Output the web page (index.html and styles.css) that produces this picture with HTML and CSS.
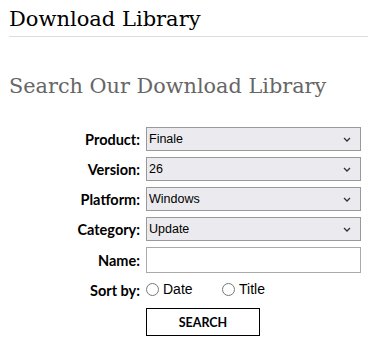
FILE: index.html
```html
<!DOCTYPE html>
<html lang="en">
  <head>
    <meta charset="UTF-8" />
    <meta name="viewport" content="width=device-width, initial-scale=1.0" />
    <title>Download Library</title>
    <link rel="stylesheet" href="styles.css">
  </head>
  <body>
    <h1 class="page-title">Download Library</h1>

    <h2 class="section-title">Search Our Download Library</h2>

    <form id="searchForm" class="search-form">
      <label for="product">Product:</label>
      <select id="product" name="product">
        <option>Finale</option>
      </select>

      <label for="version">Version:</label>
      <select id="version" name="version">
        <option>26</option>
      </select>

      <label for="platform">Platform:</label>
      <select id="platform" name="platform">
        <option>Windows</option>
      </select>

      <label for="category">Category:</label>
      <select id="category" name="category">
        <option>Update</option>
      </select>

      <label for="name">Name:</label>
      <input type="text" id="name" name="name" />

      <label class="sort-label">Sort by:</label>
      <div class="sort-options">
        <label class="radio"><input type="radio" name="sort" value="date" /> Date</label>
        <label class="radio"><input type="radio" name="sort" value="title" /> Title</label>
      </div>

      <span></span>
      <button type="submit" class="btn">SEARCH</button>
    </form>
  </body>
</html>
```

FILE: styles.css
```css
body {
  margin: 0;
  padding: 0 0 0 9px;
  font-family: Lato, Arial, sans-serif;
  color: #000;
  background: #fff;
}
.page-title {
  font-family: "DejaVu Serif", serif;
  font-weight: normal;
  font-size: 21px;
  line-height: 26px;
  margin: 6px 0 0;
  padding-bottom: 4px;
  border-bottom: 1px solid #ddd;
}
.section-title {
  font-family: "DejaVu Serif", serif;
  font-weight: normal;
  font-size: 20.8px;
  line-height: 28px;
  color: #666;
  margin: 35px 0 27px;
}
.search-form {
  display: grid;
  grid-template-columns: 131px 215px;
  column-gap: 6px;
  row-gap: 6px;
  align-items: center;
}
.search-form > label {
  text-align: right;
  font-weight: bold;
  font-size: 14.5px;
}
.sort-label {
  padding-top: 3px;
}
select {
  appearance: none;
  height: 24px;
  border: 1px solid #999;
  background-color: #ebebef;
  background-image: url("data:image/svg+xml;utf8,<svg xmlns='http://www.w3.org/2000/svg' width='8' height='5' viewBox='0 0 8 5'><path d='M1 1l3 3 3-3' fill='none' stroke='%23333' stroke-width='1.3'/></svg>");
  background-repeat: no-repeat;
  background-position: right 9px center;
  font-family: "Liberation Sans", Arial, sans-serif;
  font-size: 12.5px;
  padding: 0 2px;
  color: #000;
  margin: 0;
}
input[type="text"] {
  height: 26px;
  border: 1px solid #aaa;
  box-sizing: border-box;
  margin: 0;
}
.sort-options {
  display: flex;
  gap: 14px;
  font-family: "Liberation Sans", Arial, sans-serif;
  font-size: 14px;
}
.radio {
  display: flex;
  align-items: center;
  gap: 4px;
  width: 62px;
}
.radio input {
  margin: 0;
  width: 13px;
  height: 13px;
}
.btn {
  width: 114px;
  height: 28px;
  margin-top: 3px;
  background: #fff;
  border: 1px solid #000;
  font-family: Lato, Arial, sans-serif;
  font-weight: bold;
  font-size: 12.5px;
  cursor: pointer;
}
```
